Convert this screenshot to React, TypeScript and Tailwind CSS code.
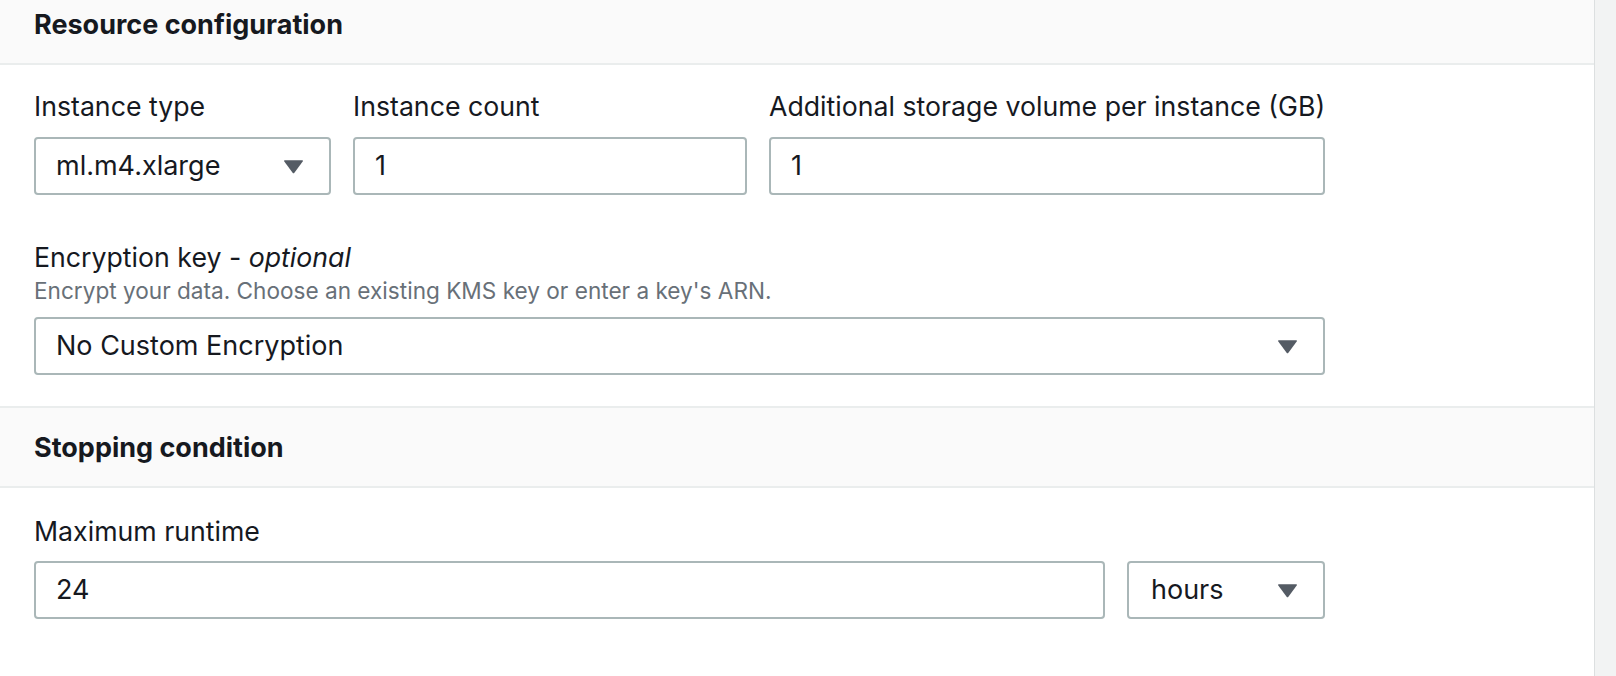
function Caret() {
  return (
    <svg width="21" height="15" viewBox="0 0 21 15" className="shrink-0">
      <path
        d="M2 1.2 H19 Q20.6 1.2 19.7 2.6 L11.4 13.7 Q10.5 14.8 9.6 13.7 L1.3 2.6 Q0.4 1.2 2 1.2 Z"
        fill="#545b64"
      />
    </svg>
  );
}

function Box({ value, select, className }: { value: string; select?: boolean; className: string }) {
  return (
    <div
      className={`h-[58px] flex items-center justify-between border-2 border-[#aab7b8] rounded-[4px] bg-white pl-[20px] pr-[25px] text-[27px] leading-[32px] text-[#16191f] ${className}`}
    >
      <span>{value}</span>
      {select && <Caret />}
    </div>
  );
}

function Label({ children }: { children: React.ReactNode }) {
  return <div className="text-[26.7px] leading-[32px] text-[#16191f] whitespace-nowrap">{children}</div>;
}

export default function App() {
  return (
    <div className="flex h-[676px] w-full overflow-hidden bg-[#f2f3f3] font-[Inter,sans-serif]">
      <div className="w-[1594px] shrink-0 bg-white">
        {/* Resource configuration */}
        <div className="h-[65px] bg-[#fafafa] border-b-2 border-[#eaeded] px-[34px] pt-[9px]">
          <h2 className="text-[27px] leading-[32px] font-bold text-[#16191f]">Resource configuration</h2>
        </div>

        <div className="px-[34px] pt-[25px] pb-[31px]">
          <div className="flex gap-[22px]">
            <div className="w-[297px]">
              <Label>Instance type</Label>
              <Box value="ml.m4.xlarge" select className="mt-[15px]" />
            </div>
            <div className="w-[394px]">
              <Label>Instance count</Label>
              <Box value="1" className="mt-[15px]" />
            </div>
            <div className="w-[556px]">
              <Label>Additional storage volume per instance (GB)</Label>
              <Box value="1" className="mt-[15px]" />
            </div>
          </div>

          <div className="mt-[46px] w-[1291px]">
            <Label>
              Encryption key - <i>optional</i>
            </Label>
            <div className="mt-[5px] text-[22.6px] leading-[26px] text-[#687078]">
              Encrypt your data. Choose an existing KMS key or enter a key's ARN.
            </div>
            <Box value="No Custom Encryption" select className="mt-[13px]" />
          </div>
        </div>

        {/* Stopping condition */}
        <div className="h-[82px] bg-[#fafafa] border-y-2 border-[#eaeded] px-[34px] pt-[24px]">
          <h2 className="text-[27px] leading-[32px] font-bold text-[#16191f]">Stopping condition</h2>
        </div>

        <div className="px-[34px] pt-[27px]">
          <Label>Maximum runtime</Label>
          <div className="mt-[14px] flex gap-[22px] w-[1291px]">
            <Box value="24" className="flex-1" />
            <Box value="hours" select className="w-[198px] pl-[22px]" />
          </div>
        </div>
      </div>
      <div className="w-px bg-[#dcdfe0]" />
      <div className="flex-1" />
    </div>
  );
}
